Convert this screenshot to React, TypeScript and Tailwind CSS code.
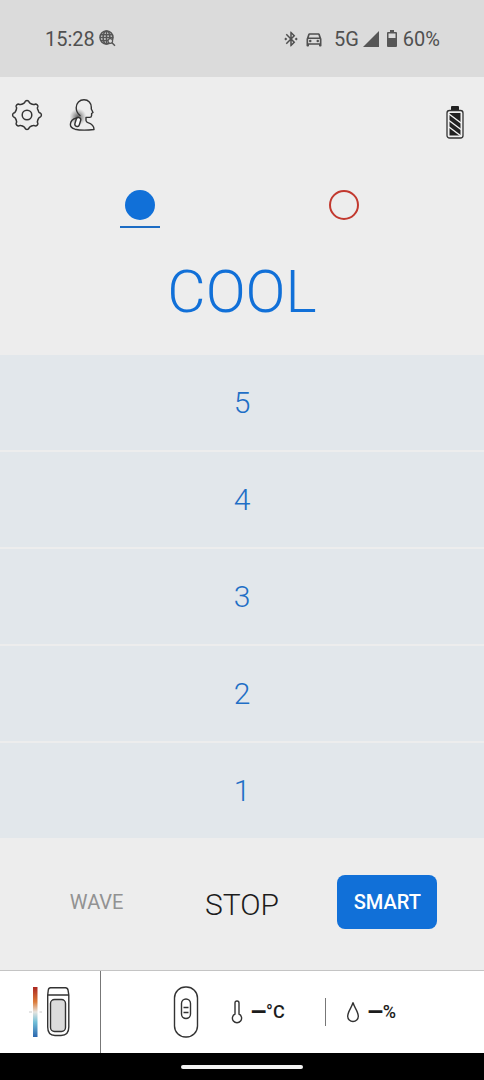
import { useState } from "react";
import { MdBluetoothConnected, MdOutlineDirectionsCar } from "react-icons/md";

const LEVELS = [5, 4, 3, 2, 1];

const polar = (r: number, deg: number) => {
  const a = (deg * Math.PI) / 180;
  return `${(16 + r * Math.cos(a)).toFixed(2)} ${(16 + r * Math.sin(a)).toFixed(2)}`;
};

// eight rounded teeth around the hub
const GEAR = [0, 45, 90, 135, 180, 225, 270, 315]
  .map((d, i) => `${i ? "Q" + polar(11.6, d - 22.5) + " " : "M"}${polar(12.2, d - 14)}Q${polar(12.6, d - 9)} ${polar(13.6, d - 8)}Q${polar(14.4, d - 6)} ${polar(14.4, d)}Q${polar(14.4, d + 6)} ${polar(13.6, d + 8)}Q${polar(12.6, d + 9)} ${polar(12.2, d + 14)}`)
  .join("") + "Z";

function GearIcon() {
  return (
    <svg viewBox="0 0 32 32" className="size-8" fill="none" stroke="#333" strokeWidth="1.5" strokeLinejoin="round">
      <path d={GEAR} />
      <circle cx="16" cy="16" r="4.800" />
    </svg>
  );
}

function NeckIcon() {
  return (
    <svg viewBox="0 0 28 34" className="h-[34px] w-7" fill="none" stroke="#333" strokeWidth="1.4" strokeLinecap="round" strokeLinejoin="round">
      <defs>
        <radialGradient id="neckGlow">
          <stop offset="0" stopColor="#444" stopOpacity="0.9" />
          <stop offset="0.5" stopColor="#777" stopOpacity="0.55" />
          <stop offset="1" stopColor="#999" stopOpacity="0" />
        </radialGradient>
      </defs>
      <circle cx="9" cy="19" r="8.500" fill="url(#neckGlow)" stroke="none" />
      <path d="M11 17.500C8.500 15.500 7.200 12.800 7.200 9.800C7.200 5 10.600 1.800 15 1.800C19.500 1.800 22.300 5 22.300 9.200V11L24 14.500L22.600 15.500V17.500Q22.400 19.500 20.500 19.400H17V22.500Q17.200 24 19 24.700C23 26 25 27.500 25 31.500C19 32.200 11 32.400 6 31.200C2.800 30.300 1.300 28.500 1.400 26.300C1.600 23 4 20.800 7.500 20" />
      <rect x="6.500" y="19.500" width="4.600" height="9" rx="2.300" transform="rotate(17 8.800 24)" fill="#fafafa" />
    </svg>
  );
}

function DeviceBattery() {
  return (
    <svg viewBox="0 0 18 34" className="h-[34px] w-[18px]" role="img" aria-label="Device battery">
      <rect x="5" y="1" width="8" height="6" rx="1" fill="#222" />
      <rect x="1" y="5.500" width="16" height="27.500" rx="2.500" fill="#f1f1f1" stroke="#333" strokeWidth="1.300" />
      <path d="M3.500 8H14.500V30.500H3.500Z" fill="#222" />
      <path d="M3 9L15 18M3 15.500L15 24.500M3 22L15 31" stroke="#f1f1f1" strokeWidth="1.400" />
    </svg>
  );
}

function GlobeSearch() {
  return (
    <svg viewBox="0 0 17 17" className="size-[17px]" fill="none" stroke="#565656" strokeWidth="1.500">
      <circle cx="7.500" cy="7.500" r="6.500" />
      <ellipse cx="7.500" cy="7.500" rx="3.400" ry="6.500" />
      <path d="M1.500 4.700H13.500M.8 7.500H14.200M1.500 10.500H9M7.500 1V14" />
      <circle cx="11.300" cy="11" r="2.300" fill="#dbdbdb" strokeWidth="1.200" />
      <path d="M13 12.800L16 15.800" />
    </svg>
  );
}

function StatusBar() {
  return (
    <div className="flex h-[77px] items-center justify-between bg-[#dbdbdb] pr-11 pl-[45px] text-[20px] text-[#505050]">
      <div className="flex items-center gap-1">
        <span>15:28</span>
        <GlobeSearch />
      </div>
      <div className="flex items-center">
        <MdBluetoothConnected className="mr-1 size-[18px]" />
        <MdOutlineDirectionsCar className="mr-2.5 size-5" />
        <span>5G</span>
        <svg viewBox="0 0 16 16" className="ml-1 size-4" fill="#565656"><path d="M16 0V16H0Z" /></svg>
        <svg viewBox="0 0 10 17" className="mr-1.5 ml-2 h-[17px] w-2.5">
          <path d="M3 0H7V2H9Q10 2 10 3V16Q10 17 9 17H1Q0 17 0 16V3Q0 2 1 2H3Z" fill="#565656" />
          <path d="M1.500 3.500H8.500V8H1.500Z" fill="#dbdbdb" />
        </svg>
        <span>60%</span>
      </div>
    </div>
  );
}

function CoolingUnit() {
  return (
    <svg viewBox="0 0 42 52" className="h-[52px] w-[42px]" fill="none" stroke="#333" strokeWidth="1.400">
      <defs>
        <linearGradient id="tempScale" x1="0" y1="0" x2="0" y2="1">
          <stop offset="0" stopColor="#ab2620" />
          <stop offset="0.3" stopColor="#dc7c3a" />
          <stop offset="0.5" stopColor="#e6e4df" />
          <stop offset="0.7" stopColor="#74c0d8" />
          <stop offset="1" stopColor="#2a66ae" />
        </linearGradient>
      </defs>
      <rect x="4" y="1" width="4.500" height="50" fill="url(#tempScale)" stroke="none" />
      <path d="M0 26H3M10.500 26H13" stroke="#ccc" strokeWidth="1" />
      <path d="M21.500 1.700H36.500Q38.500 1.700 39 4L39.800 9V41Q39.800 49.500 32 49.500H26Q18.700 49.500 18.700 41V9L19.300 4Q19.700 1.700 21.500 1.700ZM18.700 9H39.800" />
      <rect x="21.500" y="13.500" width="15" height="32" rx="4" fill="#dcdcdc" />
    </svg>
  );
}

function RemoteIcon() {
  return (
    <svg viewBox="0 0 26 52" className="h-[52px] w-[26px]" fill="none" stroke="#333" strokeWidth="1.400">
      <rect x="1.500" y="1" width="23" height="50" rx="11" />
      <rect x="8.500" y="13" width="9" height="19.500" rx="4.500" />
      <path d="M10.500 21.500H15.500M10.500 26.500H15.500" />
    </svg>
  );
}

function Reading({ unit }: { unit: string }) {
  return (
    <span className="flex items-center text-[18px] leading-6 font-medium text-[#1c1c1c]">
      <span className="text-[20px] font-black">—</span>
      {unit}
    </span>
  );
}

export default function App() {
  const [mode, setMode] = useState<"cool" | "warm">("cool");

  return (
    <div className="flex min-h-screen flex-col bg-[#ededed] font-['Roboto',sans-serif]">
      <StatusBar />
      <header className="flex h-[62px] justify-between pt-[22px] pr-5 pl-[11px]">
        <div className="flex h-8 items-center gap-[26px]">
          <button aria-label="Settings"><GearIcon /></button>
          <button aria-label="Wearing position"><NeckIcon /></button>
        </div>
        <div className="self-end"><DeviceBattery /></div>
      </header>

      <main className="flex flex-1 flex-col">
        <div className="grid grid-cols-2 justify-items-center px-[38px] pt-[51px]">
          <button onClick={() => setMode("cool")} aria-label="Cool" aria-pressed={mode === "cool"} className="flex h-[38px] w-10 flex-col items-center justify-between">
            <span className="size-[30px] rounded-full bg-[#1170d8]" />
            <span className="h-0.5 w-full bg-[#1c6cc4]" />
          </button>
          <button onClick={() => setMode("warm")} aria-label="Warm" aria-pressed={mode === "warm"} className="flex h-[38px] w-10 flex-col items-center">
            <span className="size-[30px] rounded-full border-2 border-[#c2392f]" />
          </button>
        </div>
        <h1 className="pt-[34px] pb-[33px] text-center text-[59px] leading-[60px] font-light text-[#1170d8]">COOL</h1>

        <div className="flex flex-col gap-0.5">
          {LEVELS.map((n) => (
            <button key={n} className="h-[95px] bg-[#e2e7eb] text-[30px] font-light text-[#1f6fc6]">{n}</button>
          ))}
        </div>

        <div className="grid flex-1 grid-cols-3 items-start justify-items-center px-6 pt-[37px] pb-8">
          <button className="text-[20px] leading-[54px] text-[#929292]">WAVE</button>
          <button className="text-[30px] leading-[60px] font-light text-[#1c1c1c]">STOP</button>
          <button className="w-[100px] rounded-lg bg-[#1170d8] text-[20px] leading-[54px] font-medium text-white">SMART</button>
        </div>
      </main>

      <footer>
        <div className="flex h-[83px] border-t border-[#c4c4c4] bg-white">
          <div className="flex w-[101px] items-center justify-center border-r border-[#777]">
            <CoolingUnit />
          </div>
          <div className="flex flex-1 items-center justify-center pr-4">
            <RemoteIcon />
            <div className="ml-8 flex items-center gap-2">
              <svg viewBox="0 0 12 24" className="h-6 w-3" fill="none" stroke="#333" strokeWidth="1.400">
                <path d="M4 14V3Q4 1 6 1T8 3V14A4.600 4.600 0 1 1 4 14Z" />
              </svg>
              <Reading unit="°C" />
            </div>
            <div className="mr-5 ml-10 h-7 border-l border-[#777]" />
            <div className="flex items-center gap-2">
              <svg viewBox="0 0 14 22" className="h-[22px] w-3.5" fill="none" stroke="#333" strokeWidth="1.400">
                <path d="M7 1.500C6 6 1.700 10.500 1.700 15.200A5.300 5.300 0 0 0 12.300 15.200C12.300 10.500 8 6 7 1.500Z" />
              </svg>
              <Reading unit="%" />
            </div>
          </div>
        </div>
        <div className="flex h-[27px] items-center justify-center bg-black">
          <div className="h-1 w-[122px] rounded-full bg-[#f2f2f2]" />
        </div>
      </footer>
    </div>
  );
}
